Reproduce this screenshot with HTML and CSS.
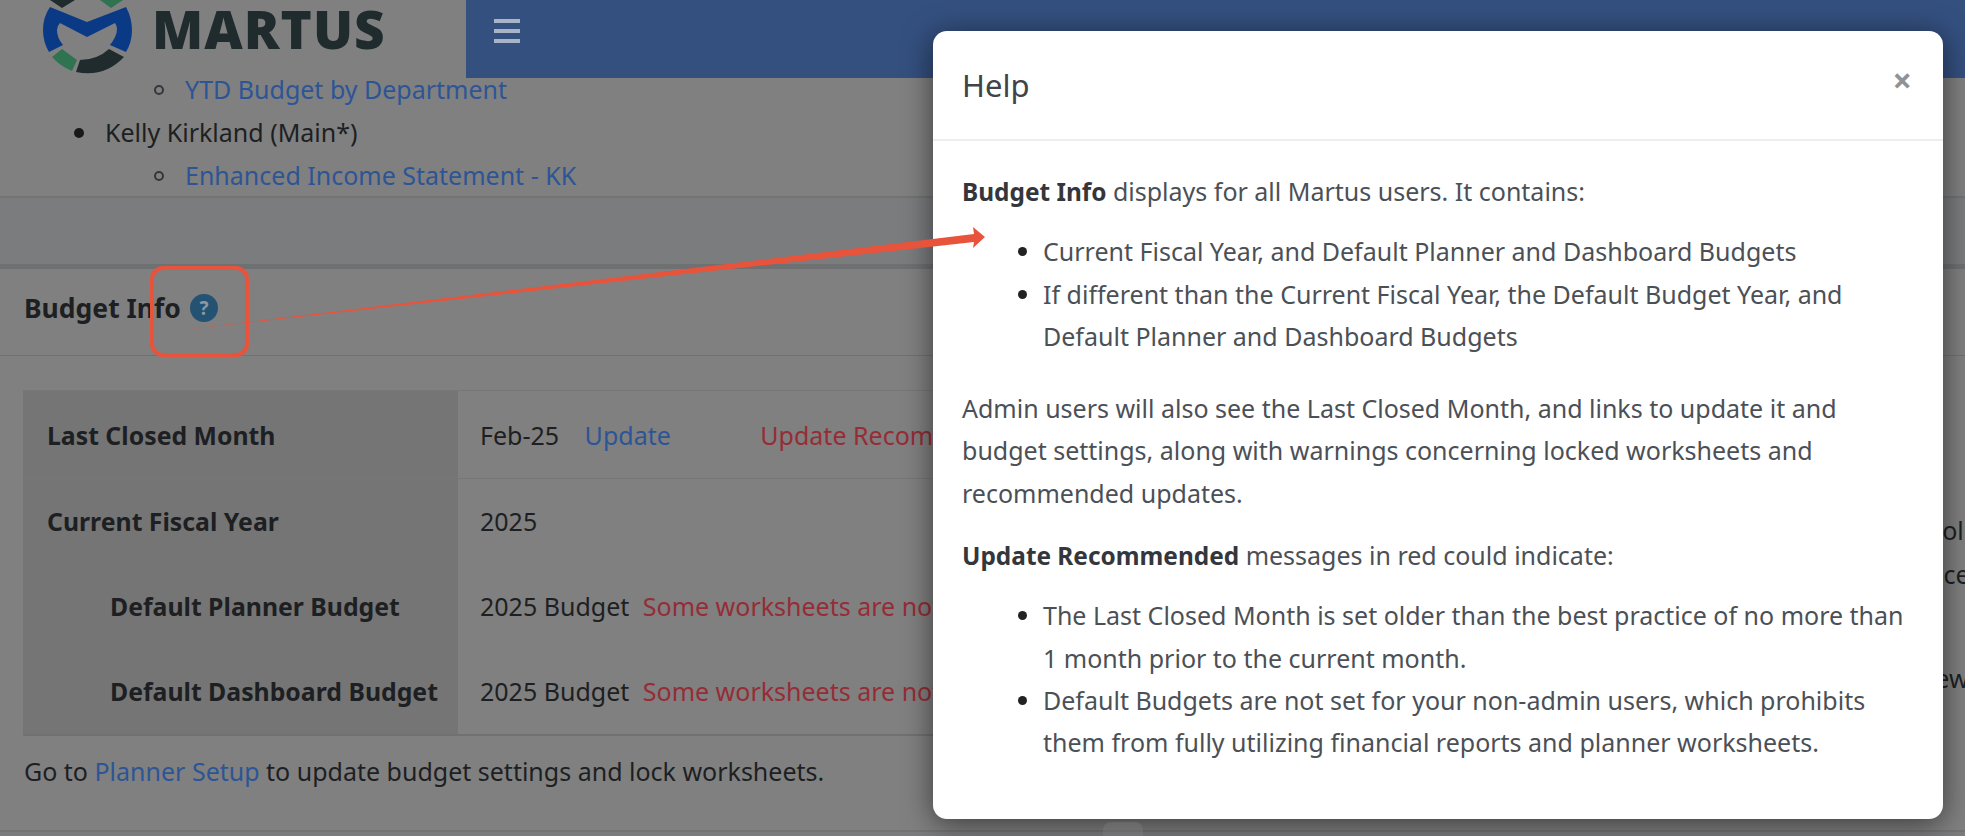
FILE: index.html
```html
<!DOCTYPE html>
<html lang="en">
<head>
  <meta charset="UTF-8">
  <title>Martus - Budget Info</title>
  <link rel="stylesheet" href="styles.css">
</head>
<body>
<div class="page">
  <header class="topbar">
    <div class="brand">
      <svg class="brand-mark" viewBox="0 0 140 78" width="140" height="78">
        <path fill="#0a3a86" d="M50 7 L87 22 L126 7 Q132 18 132 30 Q132 42 126 52 L110 45 Q117 36 117 29 Q117 26 115 23 L87 37 L60 23 Q57 26 57 30 Q57 38 63 45 L49 52 Q43 42 43 30 Q43 17 50 7 Z"/>
        <path fill="#2f7350" d="M52 57 L62 49 L77 60 L72 71 Q60 66 52 57 Z"/>
        <path fill="#1f2b2d" d="M80 60 Q97 60 109 49 L124 57 Q104 78 76 72 Z"/>
        <path fill="#1f2b2d" d="M50 0 L75 0 L62 8 Z"/>
        <path fill="#2f7350" d="M100 0 L123 0 L111 8 Z"/>
      </svg>
      <span class="brand-name">MARTUS</span>
    </div>
    <div class="navbar">
      <span class="burger"><i></i><i></i><i></i></span>
    </div>
  </header>

  <ul class="report-list">
    <li class="sub-item"><a href="#">YTD Budget by Department</a></li>
    <li>Kelly Kirkland (Main*)</li>
    <li class="sub-item"><a href="#">Enhanced Income Statement - KK</a></li>
  </ul>

  <div class="band"></div>

  <section class="card">
    <div class="card-head">
      <h2>Budget Info</h2>
      <span class="help-dot">?</span>
    </div>
    <div class="card-body">
      <div class="card-main">
        <table class="info-table">
          <tr>
            <th>Last Closed Month</th>
            <td>Feb-25 <a class="update-link" href="#">Update</a> <span class="warn update-warn">Update Recommended</span></td>
          </tr>
          <tr class="no-line">
            <th>Current Fiscal Year</th>
            <td>2025</td>
          </tr>
          <tr class="no-line">
            <th class="indent">Default Planner Budget</th>
            <td>2025 Budget <span class="warn budget-warn">Some worksheets are not locked</span></td>
          </tr>
          <tr class="no-line">
            <th class="indent">Default Dashboard Budget</th>
            <td>2025 Budget <span class="warn budget-warn">Some worksheets are not locked</span></td>
          </tr>
        </table>
        <p class="card-note">Go to <a href="#">Planner Setup</a> to update budget settings and lock worksheets.</p>
      </div>
      <div class="side-notes">
        <span class="side-first">Control</span>
        <span>Practice</span>
        <span class="side-last">Review</span>
      </div>
    </div>
  </section>
  <div class="foot-band"></div>
</div>

<!-- Help modal -->
<div class="modal">
  <div class="modal-head">
    <h3>Help</h3>
    <span class="modal-close">&times;</span>
  </div>
  <div class="modal-body">
    <p><b>Budget Info</b> displays for all Martus users. It contains:</p>
    <ul>
      <li>Current Fiscal Year, and Default Planner and Dashboard Budgets</li>
      <li>If different than the Current Fiscal Year, the Default Budget Year, and Default Planner and Dashboard Budgets</li>
    </ul>
    <p>Admin users will also see the Last Closed Month, and links to update it and budget settings, along with warnings concerning locked worksheets and recommended updates.</p>
    <p><b>Update Recommended</b> messages in red could indicate:</p>
    <ul>
      <li>The Last Closed Month is set older than the best practice of no more than 1 month prior to the current month.</li>
      <li>Default Budgets are not set for your non-admin users, which prohibits them from fully utilizing financial reports and planner worksheets.</li>
    </ul>
  </div>
</div>
<div class="scroll-tab"></div>

<!-- Annotation drawn on top of the screenshot -->
<svg class="annotation" viewBox="0 0 1965 836" width="1965" height="836">
  <rect x="152" y="268" width="95" height="87" rx="11" fill="none" stroke="#e8533b" stroke-width="4"/>
  <path fill="#e8533b" d="M182 330 L974 234 L973 227 L985 237 L973 248 L974 242 Z"/>
</svg>
</body>
</html>
```
FILE: styles.css
```css
/* Colours are the dimmed ones, as seen behind the modal backdrop */
:root {
  --page-bg: #808080;
  --band-bg: #7b7c7e;
  --line: #717171;
  --text-dim: #1d1f22;
  --link-dim: #2d5596;
  --warn-dim: #962c36;
  --nav-blue: #34507f;
}

html, body {
  margin: 0;
  height: 100%;
  overflow: hidden;
}

body {
  position: relative;
  width: 1965px;
  height: 836px;
  background: var(--page-bg);
  font-family: "Noto Sans", "Open Sans", sans-serif;
  font-size: 25px;
  color: var(--text-dim);
}

a {
  color: var(--link-dim);
  text-decoration: none;
}

/* Header */
.topbar {
  display: flex;
  height: 78px;
}

.brand {
  display: flex;
  align-items: flex-start;
  width: 466px;
}

.brand-name {
  margin-left: 12px;
  padding-top: 1px;
  font-family: "Open Sans", sans-serif;
  font-size: 53px;
  line-height: 56px;
  font-weight: 800;
  letter-spacing: 1px;
  color: #1f2b2d;
}

.navbar {
  flex: 1;
  background: var(--nav-blue);
  padding: 19px 0 0 28px;
}

.burger {
  display: flex;
  flex-direction: column;
  gap: 6px;
  width: 26px;
}

.burger i {
  display: block;
  height: 4px;
  background: #a9b4c6;
}

/* List above the card */
.report-list {
  margin: -10px 0 0;
  padding: 0 0 0 105px;
  height: 128px;
  line-height: 43px;
  list-style: none;
}

.report-list li {
  position: relative;
}

.report-list li::before {
  content: "";
  position: absolute;
  left: -31px;
  top: 17px;
  width: 10px;
  height: 10px;
  border-radius: 50%;
  background: #17191b;
}

.report-list .sub-item {
  margin-left: 80px;
}

.report-list .sub-item::before {
  box-sizing: border-box;
  background: none;
  border: 2px solid #33363a;
}

.band {
  height: 66px;
  background: var(--band-bg);
  border-top: 2px solid #727375;
  border-bottom: 5px solid #6f7072;
}

/* Card */
.card {
  height: 561px;
}

.card-head {
  display: flex;
  align-items: center;
  gap: 9px;
  box-sizing: border-box;
  height: 87px;
  padding: 0 0 8px 24px;
  border-bottom: 1px solid var(--line);
}

.card-head h2 {
  margin: 0;
  font-size: 26.5px;
  font-weight: 700;
}

.help-dot {
  width: 28px;
  height: 28px;
  border-radius: 50%;
  background: #245273;
  color: #8a98a3;
  font-size: 19px;
  font-weight: 700;
  line-height: 28px;
  text-align: center;
}

.card-body {
  display: flex;
  padding: 34px 0 0 23px;
}

.card-main {
  flex-shrink: 0;
  width: 1300px;
}

.info-table {
  width: 100%;
  table-layout: fixed;
  border-collapse: collapse;
  border-bottom: 2px solid var(--line);
}

.info-table tr {
  height: 85px;
  border-top: 1px solid #777;
}

.info-table tr:first-child {
  height: 88px;
  border-bottom: 1px solid #777;
}

.info-table tr:last-child {
  height: 86px;
}

.info-table tr.no-line {
  border-top: 0;
}

.info-table th {
  box-sizing: border-box;
  width: 435px;
  padding-left: 24px;
  background: #757575;
  text-align: left;
  font-size: 24.8px;
  font-weight: 700;
  white-space: nowrap;
}

.info-table th.indent {
  padding-left: 87px;
}

.info-table td {
  padding-left: 22px;
  white-space: nowrap;
  overflow: hidden;
}

.warn {
  color: var(--warn-dim);
}

.update-link {
  margin-left: 19px;
}

.update-warn {
  margin-left: 83px;
}

.budget-warn {
  margin-left: 7px;
}

.card-note {
  margin: 19px 0 0;
  line-height: 32px;
  padding-left: 1px;
}

.side-notes {
  display: flex;
  flex-direction: column;
  flex-shrink: 0;
  margin-left: 554px;
  padding-top: 124px;
  line-height: 32px;
  white-space: nowrap;
}

.side-notes span + span {
  margin-top: 12px;
}

.side-notes .side-last {
  margin: 72px 0 0 10px;
}

.foot-band {
  height: 8px;
  background: var(--band-bg);
  border-top: 2px solid #727375;
}

/* Help modal */
.modal {
  position: absolute;
  left: 933px;
  top: 31px;
  width: 1010px;
  height: 788px;
  background: #fff;
  border-radius: 14px;
  box-shadow: 0 5px 30px rgba(0, 0, 0, 0.55);
  color: #4b5056;
}

.modal-head {
  display: flex;
  justify-content: space-between;
  height: 108px;
  padding: 0 29px;
  border-bottom: 2px solid #eceeef;
}

.modal-head h3 {
  margin: 35px 0 0;
  font-size: 31px;
  line-height: 38px;
  font-weight: 400;
  color: #3f444a;
}

.modal-close {
  margin: 26px 2px 0 0;
  font-size: 34px;
  line-height: 46px;
  font-weight: 700;
  color: #8f9397;
}

.modal-body {
  padding: 29px 29px 0;
  line-height: 42.3px;
}

.modal-body p {
  margin: 0 0 17px;
}

.modal-body p + p {
  margin-top: 20px;
}

.modal-body ul {
  margin: 0 0 30px;
  padding-left: 81px;
}

.modal-body li::marker {
  color: #222;
}

.modal-body b {
  font-size: 24.4px;
  color: #33373c;
}

/* Small tab peeking out under the modal */
.scroll-tab {
  position: absolute;
  left: 1103px;
  top: 822px;
  width: 40px;
  height: 14px;
  border-radius: 8px 8px 0 0;
  background: rgba(128, 128, 128, 0.35);
}

/* Red box and arrow */
.annotation {
  position: absolute;
  left: 0;
  top: 0;
  pointer-events: none;
}
```
